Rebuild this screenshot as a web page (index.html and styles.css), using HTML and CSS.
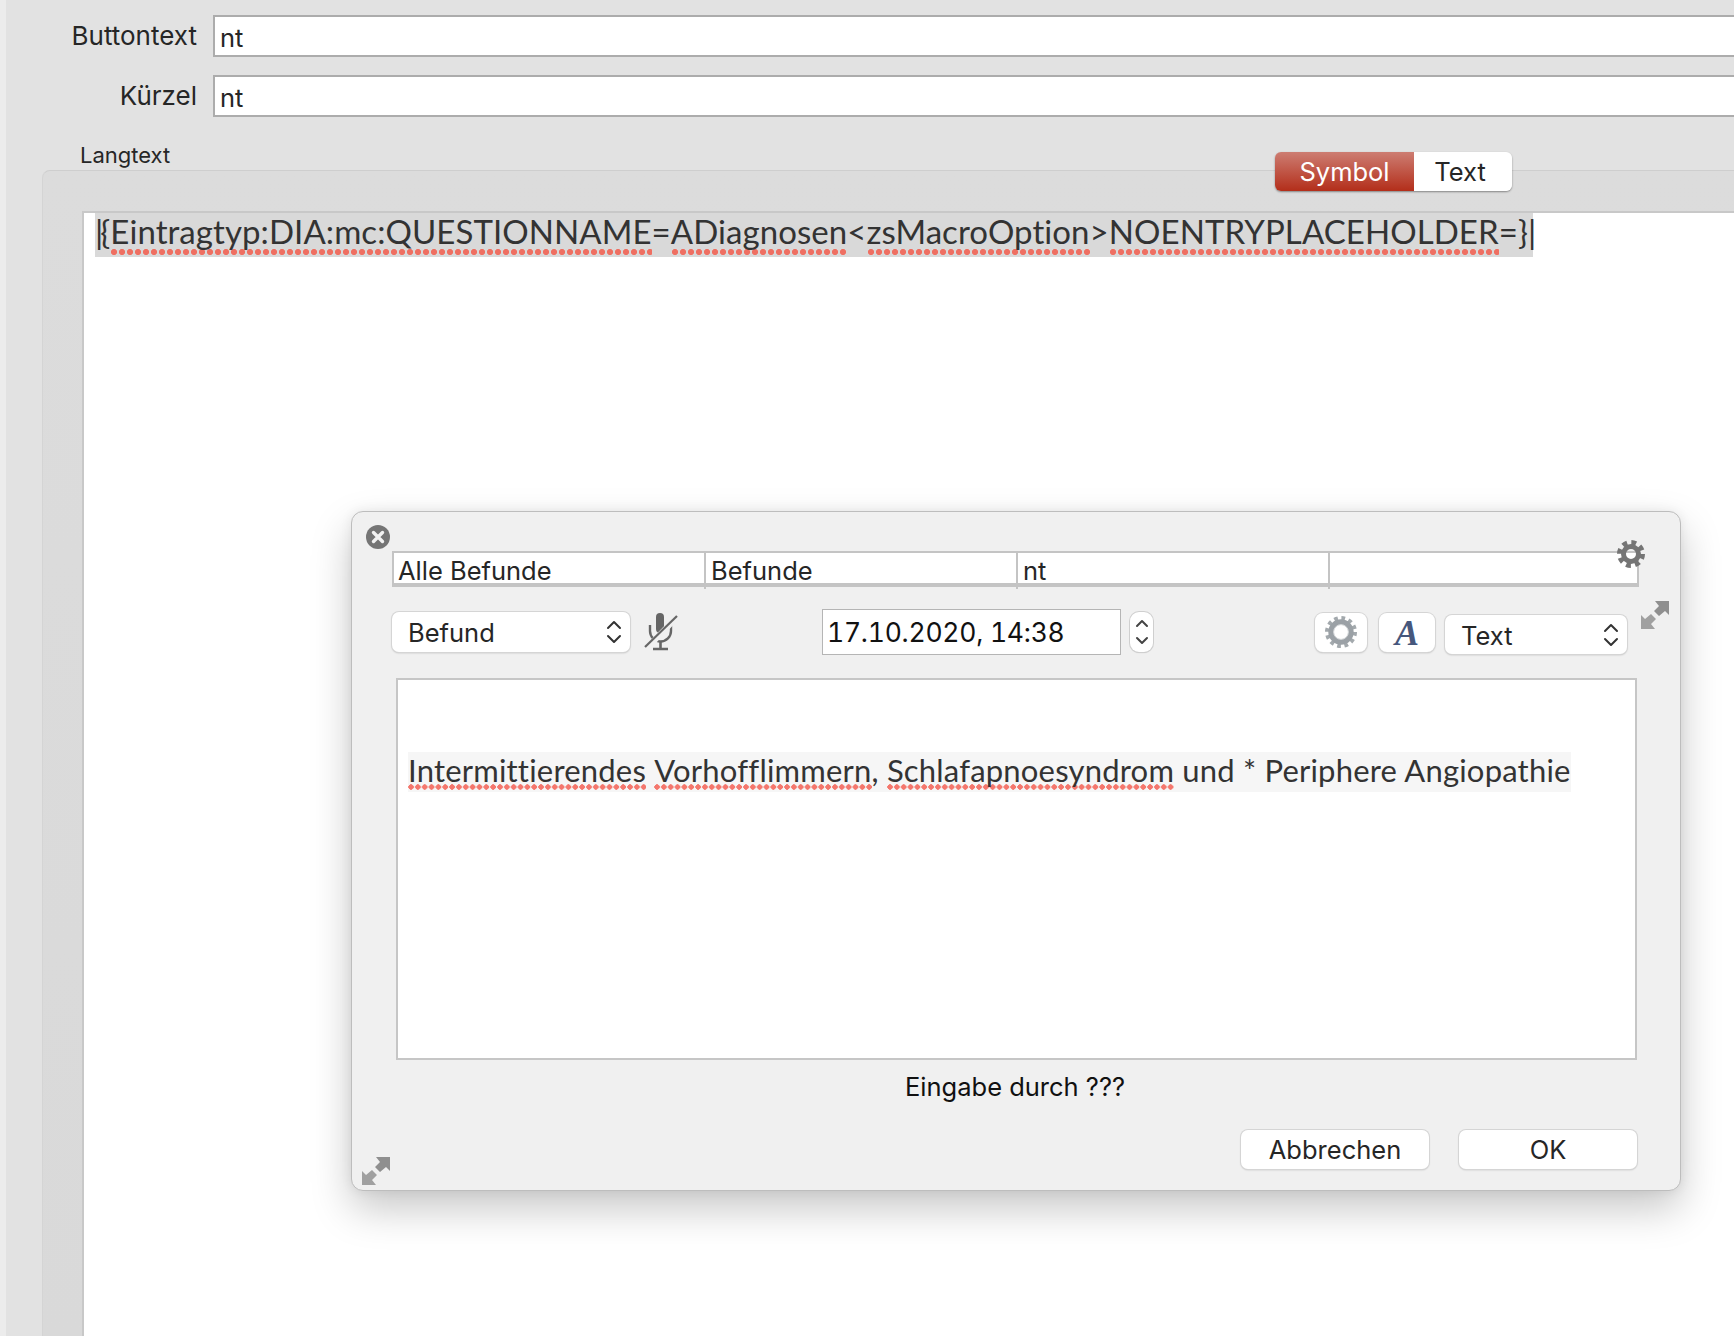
FILE: index.html
```html
<!DOCTYPE html>
<html lang="de">
<head>
<meta charset="utf-8">
<title>Langtext</title>
<link rel="stylesheet" href="styles.css">
</head>
<body>
<div class="app">
  <div class="rail"></div>
  <main class="main">
    <div class="field-row"><label class="field-label">Buttontext</label><div class="field-input">nt</div></div>
    <div class="field-row"><label class="field-label">Kürzel</label><div class="field-input">nt</div></div>
    <div class="section-label">Langtext</div>
    <section class="panel">
      <div class="segmented"><span class="seg seg-on">Symbol</span><span class="seg seg-off">Text</span></div>
      <div class="editor">
        <div class="macro"><span class="caret-bar">|</span>{<span class="spell">Eintragtyp:DIA:mc:QUESTIONNAME</span>=<span class="spell">ADiagnosen</span>&lt;<span class="spell">zsMacroOption</span>&gt;<span class="spell">NOENTRYPLACEHOLDER</span>=}<span class="caret-bar">|</span></div>
      </div>
    </section>
  </main>
</div>

<div class="dialog">
  <svg class="close-icon" viewBox="0 0 24 24" width="24" height="24"><circle cx="12" cy="12" r="12" fill="#757575"/><path d="M7.5 7.5l9 9M16.5 7.5l-9 9" stroke="#f2f2f2" stroke-width="3.4" stroke-linecap="round"/></svg>
  <svg class="corner-gear" viewBox="0 0 28 28" width="28" height="28"><circle cx="14" cy="14" r="11" fill="none" stroke="#757575" stroke-width="6" stroke-dasharray="4.6 4.04"/><circle cx="14" cy="14" r="7.5" fill="none" stroke="#757575" stroke-width="5"/></svg>
  <svg class="expand expand-top" viewBox="0 0 28 28" width="28" height="28"><path d="M14 0H28V14L24 10 18 15 13 10 18 5Z" fill="#8f8f8f"/><path d="M0 14L4 18 10 13 15 18 10 23 14 28H0Z" fill="#a0a0a0"/></svg>
  <svg class="expand expand-bottom" viewBox="0 0 28 28" width="28" height="28"><path d="M14 0H28V14L24 10 18 15 13 10 18 5Z" fill="#8f8f8f"/><path d="M0 14L4 18 10 13 15 18 10 23 14 28H0Z" fill="#a0a0a0"/></svg>

  <div class="crumbs">
    <div class="crumb">Alle Befunde</div>
    <div class="crumb">Befunde</div>
    <div class="crumb">nt</div>
    <div class="crumb"></div>
  </div>

  <div class="toolbar">
    <div class="select select-befund">Befund
      <svg class="chev" viewBox="0 0 16 26" width="16" height="26"><path d="M2 9l6-6 6 6M2 17l6 6 6-6" fill="none" stroke="#333" stroke-width="2" stroke-linecap="round" stroke-linejoin="round"/></svg>
    </div>
    <svg class="mic" viewBox="0 0 34 40" width="34" height="40"><rect x="12" y="1" width="8" height="20" rx="4" fill="#666"/><path d="M6 13v6a10.500 10.500 0 0 0 21 0v-6" fill="none" stroke="#666" stroke-width="2.400"/><path d="M16.500 29v8M9 37h15" stroke="#666" stroke-width="2.600"/><path d="M3 36L33 5" stroke="#f0f0f0" stroke-width="6"/><path d="M1 35L33 4" stroke="#666" stroke-width="2.200"/></svg>
    <div class="date">17.10.2020, 14:38</div>
    <div class="stepper"><svg viewBox="0 0 14 28" width="14" height="28"><path d="M2 8l5-5 5 5M2 20l5 5 5-5" fill="none" stroke="#444" stroke-width="2" stroke-linecap="round" stroke-linejoin="round"/></svg></div>
    <div class="tool tool-gear"><svg viewBox="0 0 34 34" width="34" height="34"><circle cx="17" cy="17" r="14" fill="none" stroke="#a3a9ad" stroke-width="4" stroke-dasharray="3.700 3.630"/><circle cx="17" cy="17" r="10" fill="none" stroke="#9ba1a6" stroke-width="5.400"/><circle cx="17" cy="17" r="7.400" fill="none" stroke="#d6d9db" stroke-width="1"/></svg></div>
    <div class="tool tool-font">A</div>
    <div class="select select-text">Text
      <svg class="chev" viewBox="0 0 16 26" width="16" height="26"><path d="M2 9l6-6 6 6M2 17l6 6 6-6" fill="none" stroke="#333" stroke-width="2" stroke-linecap="round" stroke-linejoin="round"/></svg>
    </div>
  </div>

  <div class="textbox">
    <div class="textline"><span class="spell spell-soft">Intermittierendes</span> <span class="spell spell-soft">Vorhofflimmern</span>, <span class="spell spell-soft">Schlafapnoesyndrom</span> und * Periphere Angiopathie</div>
  </div>

  <div class="author">Eingabe durch ???</div>

  <div class="actions">
    <div class="btn btn-cancel">Abbrechen</div>
    <div class="btn btn-ok">OK</div>
  </div>
</div>
</body>
</html>
```

FILE: styles.css
```css
* { box-sizing: border-box; }
html, body { margin: 0; height: 100%; overflow: hidden; background: #e2e2e2; }
body { font-family: "Inter", "Liberation Sans", sans-serif; color: #262626; }

.app { display: flex; height: 1336px; }
.rail { width: 6px; background: #ececec; flex: none; }
.main { flex: 1; min-width: 0; display: flex; flex-direction: column; padding-top: 15px; background: #e2e2e2; }

.field-row { display: flex; align-items: center; height: 42px; margin-bottom: 18px; }
.field-label { width: 191px; text-align: right; font-size: 26px; padding-bottom: 1px; flex: none; }
.field-input { flex: 1; margin-left: 16px; height: 42px; background: #fff; border: 2px solid #acacac; border-right: 0; font-size: 25.500px; line-height: 42px; padding-left: 5px; }

.section-label { margin-top: 8px; padding-left: 74px; font-size: 22px; height: 27px; line-height: 25px; }

.panel { position: relative; flex: 1; margin-left: 36px; padding: 40px 0 0 39px; background: linear-gradient(#dcdcdc, #d9d9d9); border-top: 1px solid #cecece; border-left: 1px solid #d4d4d4; border-top-left-radius: 8px; display: flex; }

.segmented { position: absolute; left: 1232px; top: -19px; width: 237px; height: 39px; display: flex; border-radius: 6px; overflow: hidden; box-shadow: 0 1px 2px rgba(0,0,0,.4); font-size: 25.500px; }
.seg { display: flex; align-items: center; justify-content: center; }
.seg-on { width: 139px; color: #fff; background: linear-gradient(#cd7d72, #b32e1a); }
.seg-off { flex: 1; background: #fff; padding-right: 6px; }

.editor { flex: 1; background: #fff; border-top: 2px solid #c8c8c8; border-left: 2px solid #c8c8c8; padding: 0 0 0 11px; }
.macro { display: inline-block; height: 44px; line-height: 36px; background: #d9d9d9; font-family: "Lato", "Liberation Sans", sans-serif; font-size: 33px; color: #333; white-space: nowrap; letter-spacing: .07px; }
.caret-bar { color: #333; margin-right: -3px; }

.spell { display: inline-block; padding-bottom: 6px; line-height: 36px; background-image: radial-gradient(circle at 4px 3px, #ef6f62 2.800px, transparent 3.200px); background-size: 8px 6px; background-repeat: repeat-x; background-position: left bottom; }

.dialog { position: absolute; left: 351px; top: 511px; width: 1330px; height: 680px; padding: 39px 0 0 40px; background: #f0f0f0; border: 1px solid #bdbdbd; border-radius: 12px; box-shadow: 0 18px 40px rgba(0,0,0,.22), 0 0 12px rgba(0,0,0,.07); }

.close-icon { position: absolute; left: 14px; top: 13px; }
.corner-gear { position: absolute; left: 1265px; top: 28px; z-index: 1; }
.expand { position: absolute; }
.expand-top { left: 1289px; top: 89px; }
.expand-bottom { left: 10px; top: 645px; }

.crumbs { width: 1247px; height: 36px; display: grid; grid-template-columns: 310px 312px 312px 1fr; background: #fff; border: 2px solid #c4c4c4; border-bottom-width: 4px; }
.crumb { font-size: 25.500px; line-height: 36px; padding-left: 5px; border-left: 2px solid #c4c4c4; white-space: nowrap; }
.crumb:first-child { border-left: 0; padding-left: 4px; }

.toolbar { width: 1235px; height: 46px; margin-top: 22px; display: flex; align-items: center; }
.select { position: relative; height: 40px; background: #fff; border-radius: 7px; box-shadow: 0 0 0 1px #d5d5d5, 0 1px 2px rgba(0,0,0,.25); font-size: 25.500px; line-height: 41px; padding-left: 16px; flex: none; }
.select-befund { width: 238px; }
.select-text { width: 182px; height: 39px; margin-left: 10px; margin-top: 4px; }
.chev { position: absolute; right: 8px; top: 7px; }
.mic { margin-left: 14px; flex: none; }
.date { width: 299px; height: 46px; margin-left: 144px; background: #fff; border: 1px solid #b5b5b5; font-size: 26.500px; line-height: 45px; padding-left: 4px; color: #111; font-variant-numeric: tabular-nums; letter-spacing: -.25px; flex: none; }
.stepper { width: 23px; height: 40px; margin-left: 9px; display: flex; align-items: center; justify-content: center; background: #fff; border-radius: 9px; box-shadow: 0 0 0 1px #cfcfcf, 0 1px 1px rgba(0,0,0,.2); flex: none; }
.tool { height: 39px; display: flex; align-items: center; justify-content: center; background: #fff; border-radius: 8px; box-shadow: 0 0 0 1px #d5d5d5, 0 1px 2px rgba(0,0,0,.25); flex: none; }
.tool-gear { width: 52px; margin-left: auto; }
.tool-font { width: 56px; margin-left: 12px; padding-top: 2px; font-family: "Liberation Serif", serif; font-style: italic; font-weight: 700; font-size: 36px; color: #46577c; }

.textbox { width: 1241px; height: 382px; margin: 23px 0 0 4px; background: #fff; border: 2px solid #c6c6c6; padding-top: 72px; padding-left: 10px; }
.textline { display: inline-block; height: 40px; background: #f6f6f6; font-family: "Lato", "Liberation Sans", sans-serif; font-size: 31px; color: #333; line-height: 36px; white-space: nowrap; letter-spacing: .2px; }
.spell-soft { line-height: 36px; padding-bottom: 2px; background-image: radial-gradient(circle at 3px 3px, #f4776d 2.500px, transparent 2.900px); background-size: 6.850px 6px; }

.author { width: 1246px; height: 50px; text-align: center; font-size: 25.500px; line-height: 54px; color: #111; }
.actions { width: 1245px; margin-top: 20px; display: flex; justify-content: flex-end; gap: 30px; }
.btn { height: 39px; background: #fff; border-radius: 7px; box-shadow: 0 0 0 1px #d5d5d5, 0 1px 2px rgba(0,0,0,.22); font-size: 25.500px; line-height: 39px; text-align: center; }
.btn-cancel { width: 188px; }
.btn-ok { width: 178px; }
```
